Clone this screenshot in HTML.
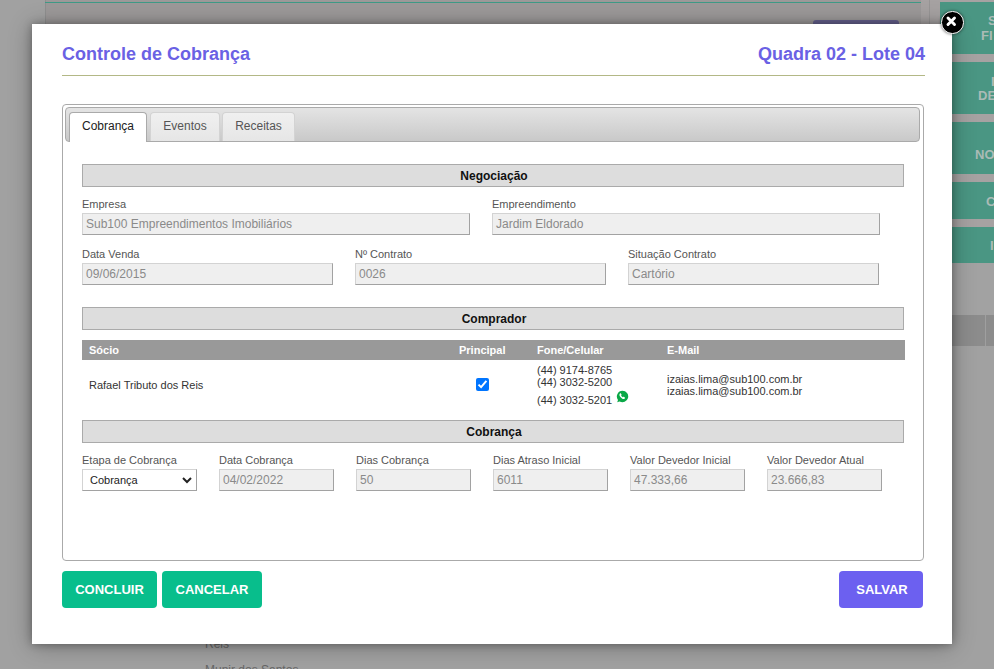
<!DOCTYPE html>
<html><head><meta charset="utf-8">
<style>
*{box-sizing:border-box;margin:0;padding:0}
html,body{width:994px;height:669px;overflow:hidden}
body{position:relative;background:#a1a1a1;font-family:"Liberation Sans",sans-serif}
.a{position:absolute;white-space:nowrap}
/* background page */
.bgpanel{position:absolute;left:45px;top:0;width:876px;height:24px;background:#9c9999;border-left:1px solid #8f8f8f}
.bgline{position:absolute;left:45px;top:2px;width:876px;height:1px;background:#3f9a86}
.gbtn{position:absolute;left:940px;width:60px;background:#4a9683;color:#b9c9c4;font-weight:bold;font-size:13px}
.gt{font-size:13px;font-weight:bold;color:#abbbb6;line-height:15px}
.modal{position:absolute;left:32px;top:24px;width:920px;height:620px;background:#fff;box-shadow:0 0 8px rgba(0,0,0,.3),0 2px 22px rgba(0,0,0,.3)}
.title{font-size:18px;font-weight:bold;color:#6a61e4;line-height:18px}
.hr{position:absolute;left:62px;top:75px;width:863px;height:1px;background:#b3b886}
.tabs{position:absolute;left:62px;top:104px;width:862px;height:457px;border:1px solid #aaa;border-radius:4px;background:#fff}
.tabbar{position:absolute;left:65px;top:107px;width:855px;height:35px;border:1px solid #aaa;border-radius:4px;background:linear-gradient(#e4e4e4,#c9c9c9)}
.tab{position:absolute;top:112px;height:29px;border:1px solid #d3d3d3;border-bottom:0;border-radius:4px 4px 0 0;background:linear-gradient(#f0f0f0,#e6e6e6);font-size:12px;color:#555;line-height:14px;padding-top:6px;text-align:center}
.tab.act{background:#fff;border-color:#aaa;color:#212121;height:30px}
.sec{position:absolute;left:82px;width:822px;height:23px;border:1px solid #aaa;background:#ddd;font-size:12px;font-weight:bold;color:#111;text-align:center;line-height:23px;padding-left:2px}
.lbl{font-size:11px;color:#555;line-height:11px}
.inp{position:absolute;height:22px;background:#efefef;border:1px solid;border-color:#d3d3d3 #a2a2a2 #a2a2a2 #d3d3d3;font-size:12px;color:#8a8a8a;line-height:20px;padding-left:3px}
.th{position:absolute;left:82px;top:340px;width:823px;height:20px;background:#999}
.tht{font-size:11px;font-weight:bold;color:#fff;line-height:11px}
.td{font-size:11px;color:#333;line-height:11px}
.btn{position:absolute;top:571px;height:37px;border-radius:4px;color:#fff;font-size:13px;font-weight:bold;text-align:center;line-height:37px}
</style></head><body>
<!-- background page remnants -->
<div class="bgpanel"></div>
<div class="bgline"></div>
<div class="a" style="left:813px;top:20px;width:86px;height:4px;background:#66628f;border-radius:3px 3px 0 0"></div>
<div class="a" style="left:921px;top:0;width:73px;height:263px;background:#a6a2a2"></div>
<div class="a" style="left:929px;top:0;width:1px;height:24px;background:#979595"></div>
<div class="gbtn" style="top:2px;height:52px"></div>
<div class="gbtn" style="top:62px;height:52px"></div>
<div class="gbtn" style="top:122px;height:52px"></div>
<div class="gbtn" style="top:182px;height:37px"></div>
<div class="gbtn" style="top:227px;height:36px"></div>
<div class="a" style="left:952px;top:263px;width:42px;height:52px;background:#a2a2a2"></div>
<div class="a" style="left:952px;top:315px;width:42px;height:31px;background:#8c8c8c"></div>
<div class="a gt" style="left:988px;top:13px">S</div>
<div class="a gt" style="left:981px;top:28px">FI</div>
<div class="a gt" style="left:991px;top:74px">I</div>
<div class="a gt" style="left:978px;top:88px">DE</div>
<div class="a gt" style="left:975px;top:147px">NO</div>
<div class="a gt" style="left:986px;top:194px">C</div>
<div class="a gt" style="left:990px;top:238px">I</div>
<div class="a" style="left:985px;top:315px;width:1px;height:31px;background:#9f9f9f"></div>
<div class="a" style="left:205px;top:637px;font-size:12px;color:#666">Reis</div>
<div class="a" style="left:190px;top:652px;width:750px;height:1px;background:#a2a2a2"></div>
<div class="a" style="left:205px;top:663px;font-size:12px;color:#666">Munir dos Santos</div>

<div class="modal"></div>
<div class="a title" style="left:62px;top:45px">Controle de Cobrança</div>
<div class="a title" style="left:758px;top:45px">Quadra 02 - Lote 04</div>
<div class="hr"></div>

<div class="tabs"></div>
<div class="tabbar"></div>
<div class="tab act" style="left:69px;width:78px">Cobrança</div>
<div class="tab" style="left:150px;width:70px">Eventos</div>
<div class="tab" style="left:222px;width:73px">Receitas</div>

<div class="sec" style="top:164px">Negociação</div>
<div class="a lbl" style="left:82px;top:199px">Empresa</div>
<div class="inp" style="left:82px;top:213px;width:388px">Sub100 Empreendimentos Imobiliários</div>
<div class="a lbl" style="left:492px;top:199px">Empreendimento</div>
<div class="inp" style="left:492px;top:213px;width:388px">Jardim Eldorado</div>

<div class="a lbl" style="left:82px;top:249px">Data Venda</div>
<div class="inp" style="left:82px;top:263px;width:251px">09/06/2015</div>
<div class="a lbl" style="left:355px;top:249px">Nº Contrato</div>
<div class="inp" style="left:355px;top:263px;width:251px">0026</div>
<div class="a lbl" style="left:628px;top:249px">Situação Contrato</div>
<div class="inp" style="left:628px;top:263px;width:251px">Cartório</div>

<div class="sec" style="top:307px">Comprador</div>
<div class="th"></div>
<div class="a tht" style="left:89px;top:345px">Sócio</div>
<div class="a tht" style="left:459px;top:345px">Principal</div>
<div class="a tht" style="left:537px;top:345px">Fone/Celular</div>
<div class="a tht" style="left:667px;top:345px">E-Mail</div>

<div class="a td" style="left:89px;top:380px">Rafael Tributo dos Reis</div>
<div class="a" style="left:476px;top:378px;width:13px;height:13px;background:#0075ff;border-radius:2px">
<svg width="13" height="13" viewBox="0 0 13 13" style="position:absolute;left:0;top:0"><path d="M2.5 6.6 L5.1 9.1 L10.4 2.9" fill="none" stroke="#fff" stroke-width="2"/></svg></div>
<div class="a td" style="left:537px;top:365px">(44) 9174-8765</div>
<div class="a td" style="left:537px;top:377px">(44) 3032-5200</div>
<div class="a td" style="left:537px;top:395px">(44) 3032-5201</div>
<div class="a" style="left:616px;top:389px;width:13px;height:13px">
<svg width="13" height="13" viewBox="0 0 13 13"><path d="M6.5 0.8a5.7 5.7 0 1 1-2.9 10.6L1.2 12.2l.8-2.3A5.7 5.7 0 0 1 6.5 0.8z" fill="#0aa847"/><path d="M3.9 3.5c.3-.3.8-.3 1 0l.6.9c.2.2.1.5-.1.7l-.3.3c.3.8 1 1.5 1.8 1.8l.3-.3c.2-.2.5-.2.7-.1l.9.6c.3.2.3.7 0 1l-.4.4c-.4.4-1.1.4-1.7.1C5.3 8.2 4.3 7.2 3.6 5.8c-.3-.6-.3-1.3.1-1.7z" fill="#fff"/></svg></div>
<div class="a td" style="left:667px;top:374px">izaias.lima@sub100.com.br</div>
<div class="a td" style="left:667px;top:386px">izaias.lima@sub100.com.br</div>

<div class="sec" style="top:420px">Cobrança</div>
<div class="a lbl" style="left:82px;top:455px">Etapa de Cobrança</div>
<div class="a" style="left:82px;top:469px;width:115px;height:22px;background:#fff;border:1px solid;border-color:#d3d3d3 #a2a2a2 #a2a2a2 #d3d3d3;font-size:11px;color:#222;line-height:20px;padding-left:7px">Cobrança
<svg width="10" height="7" viewBox="0 0 10 7" style="position:absolute;left:99px;top:7px"><path d="M1 1 L5 5 L9 1" fill="none" stroke="#222" stroke-width="2"/></svg></div>
<div class="a lbl" style="left:219px;top:455px">Data Cobrança</div>
<div class="inp" style="left:219px;top:469px;width:115px">04/02/2022</div>
<div class="a lbl" style="left:356px;top:455px">Dias Cobrança</div>
<div class="inp" style="left:356px;top:469px;width:115px">50</div>
<div class="a lbl" style="left:493px;top:455px">Dias Atraso Inicial</div>
<div class="inp" style="left:493px;top:469px;width:115px">6011</div>
<div class="a lbl" style="left:630px;top:455px">Valor Devedor Inicial</div>
<div class="inp" style="left:630px;top:469px;width:115px">47.333,66</div>
<div class="a lbl" style="left:767px;top:455px">Valor Devedor Atual</div>
<div class="inp" style="left:767px;top:469px;width:115px">23.666,83</div>

<div class="btn" style="left:62px;width:95px;background:#08be8c">CONCLUIR</div>
<div class="btn" style="left:162px;width:100px;background:#08be8c">CANCELAR</div>
<div class="btn" style="left:839px;width:84px;background:#6c60f0;padding-left:2px">SALVAR</div>

<!-- close button -->
<div class="a" style="left:941px;top:11px;width:22.5px;height:22.5px;border-radius:50%;background:#000;border:1.8px solid #fff;box-shadow:0 0 3px rgba(0,0,0,.6)">
<svg width="19" height="19" viewBox="0 0 19 19" style="position:absolute;left:0;top:0"><path d="M6 6 L12.5 12.5 M12.5 6 L6 12.5" stroke="#fff" stroke-width="2.9" stroke-linecap="round"/></svg></div>
</body></html>
